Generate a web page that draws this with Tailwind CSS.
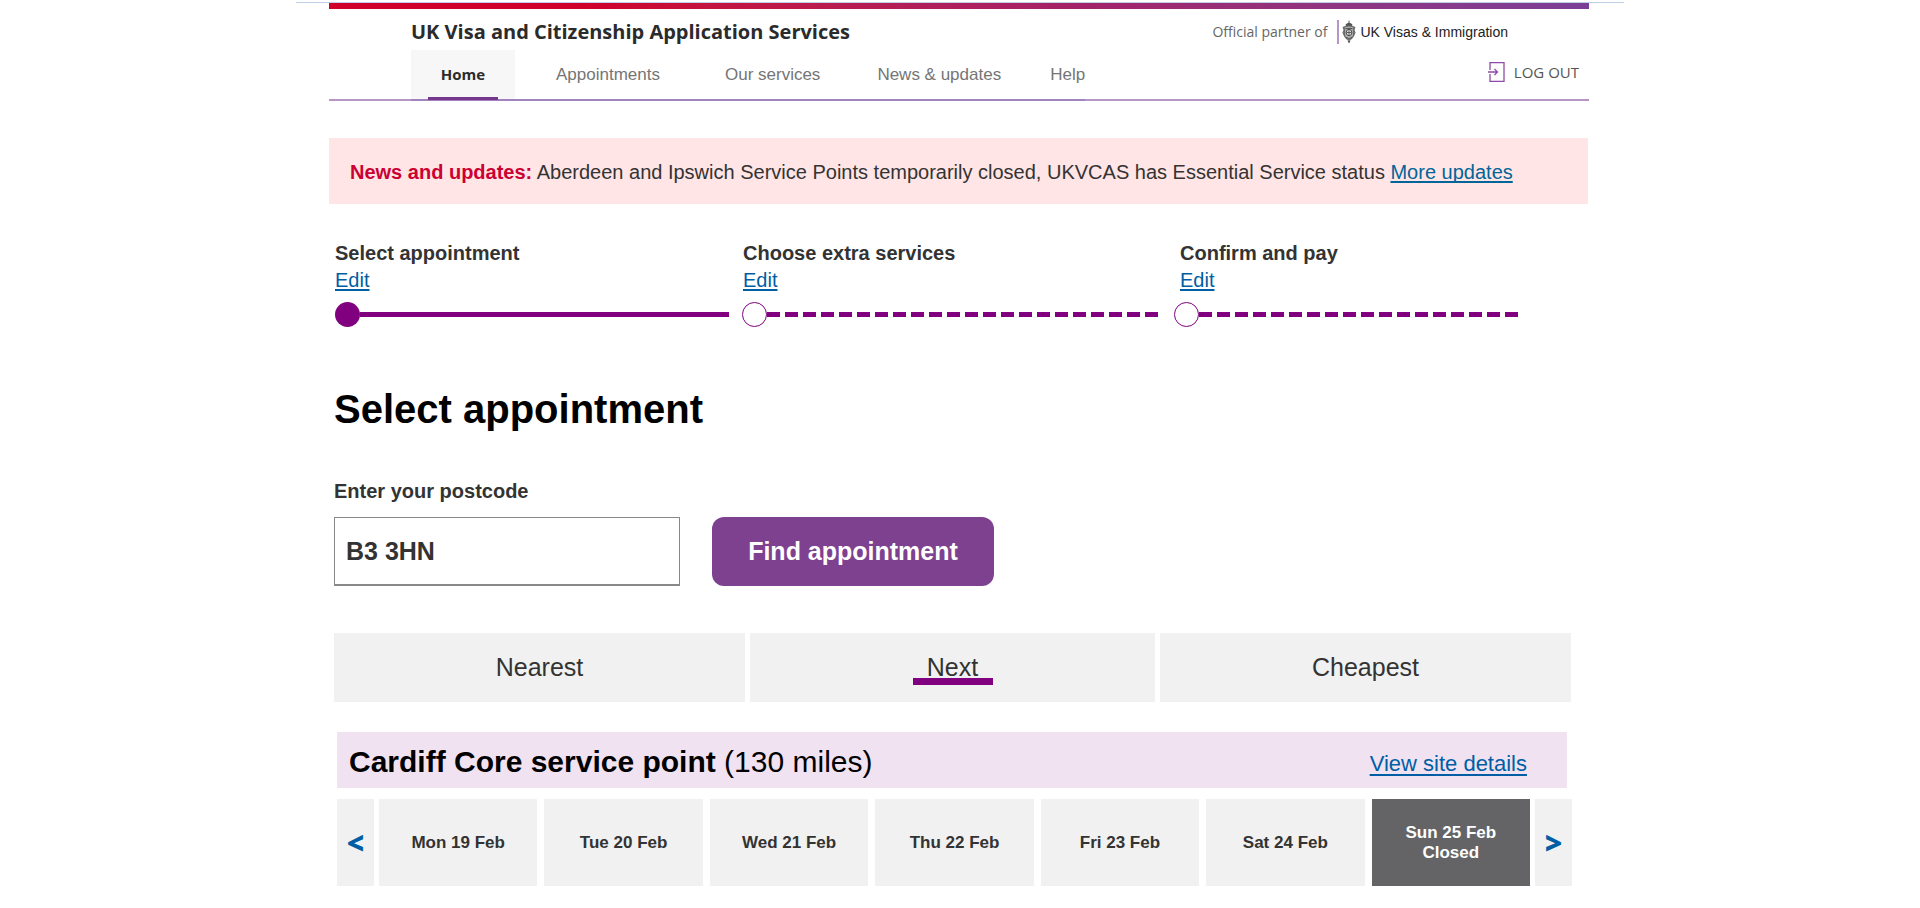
<!DOCTYPE html>
<html lang="en">
<head>
<meta charset="utf-8">
<meta name="viewport" content="width=device-width, initial-scale=1">
<title>UK Visa and Citizenship Application Services</title>
<script src="https://cdn.jsdelivr.net/npm/@tailwindcss/browser@4"></script>
</head>
<body class="bg-white font-['Liberation_Sans',Arial,sans-serif] text-[#333]">
<div class="mx-auto mt-[2px] max-w-[1328px] border-t border-[#bfd0e6] pr-[35px] pl-[33px]">
  <header>
    <div class="h-[6px] bg-linear-to-r from-[#cf0029] from-20% via-[#a3226a] via-60% to-[#7b3f97]"></div>
    <div class="flex items-center justify-between pt-[8px] pr-[81px] pl-[82px]">
      <p class="font-['Open_Sans',sans-serif] text-[20px] leading-[30px] font-bold text-[#2b2b2b]">UK Visa and Citizenship Application Services</p>
      <div class="flex items-center">
        <span class="pr-[10px] font-['Open_Sans',sans-serif] text-[14px] leading-[24px] text-[#666]">Official partner of</span>
        <a href="#" class="flex items-center border-l-2 border-[#b795c4] pl-[3px] text-[14px] leading-[24px] text-[#222]">
          <svg class="mr-[4px] h-[24px] w-[14px]" viewBox="0 0 14 24" fill="none" aria-hidden="true">
            <path d="M7 0.500v3M4 4.500q3-3 6 0l-.6 2.500h-4.800z" fill="#555" stroke="#444" stroke-width=".8"/>
            <path d="M2 7q5-2 10 0l-.5 9q-1.500 3-4.500 4-3-1-4.500-4z" fill="#aaa" stroke="#666" stroke-width="1.200"/>
            <path d="M1 7l1.500 3-1.500 2.500 1.500 3M13 7l-1.500 3 1.500 2.500-1.500 3" stroke="#666" stroke-width="1.200"/>
            <ellipse cx="7" cy="12.500" rx="2.800" ry="3.200" fill="#ddd" stroke="#444" stroke-width=".9"/>
            <path d="M7 9.500v6M4.500 12.500h5M3.500 8.500h7M4 17.500l3 1 3-1" stroke="#444" stroke-width=".8"/>
            <path d="M5.500 20.500h3L7 23.500z" fill="#444"/>
          </svg>UK Visas &amp; Immigration</a>
      </div>
    </div>
    <div class="mt-[3px] flex h-[51px] justify-between border-b-2 border-[#b795c4] pr-[10px] pl-[82px]">
      <nav class="-mb-[2px] flex border-b-2 border-[#a184bd] text-[17px] leading-[50px] text-[#757575]" aria-label="Main">
        <a href="#" aria-current="page" class="flex w-[104px] flex-col items-center bg-[#f7f7f7] font-['Open_Sans',sans-serif] text-[15px] leading-[48px] font-bold text-[#2b2b2b]">
          <span class="h-[47px] shrink-0">Home</span><span class="h-[3px] w-[70px] shrink-0 bg-[#75368d]"></span></a>
        <a href="#" class="ml-[41px]">Appointments</a>
        <a href="#" class="ml-[65px]">Our services</a>
        <a href="#" class="ml-[57px]">News &amp; updates</a>
        <a href="#" class="ml-[49px]">Help</a>
      </nav>
      <button type="button" class="flex h-[44px] items-center gap-[9px] font-['Open_Sans',sans-serif] text-[15px] text-[#555]">
        <svg class="h-[20px] w-[17px]" viewBox="0 0 17 20" fill="none" stroke="#8e4aa8" stroke-width="1.300" aria-hidden="true"><path d="M2 8V.7h14v18.600H2V12M0 10h9.500M6.500 7l3 3-3 3"/></svg>LOG OUT</button>
    </div>
  </header>

  <main>
    <aside class="mt-[37px] mr-[1px] flex items-center bg-[#ffe5e5] px-[21px] pt-[21px] pb-[19px] text-[20px] leading-[26px]">
      <p><strong class="text-[#cc0033]">News and updates:</strong> Aberdeen and Ipswich Service Points temporarily closed, UKVCAS has Essential Service status <a href="#" class="text-[#006699] underline decoration-2 underline-offset-2 [text-decoration-skip-ink:none]">More updates</a></p>
    </aside>

    <ol class="mt-[36px] grid grid-cols-[407fr_432fr_350fr] pr-[65px] pl-[6px] text-[20px] leading-[27px]">
      <li>
        <p class="font-bold">Select appointment</p>
        <a href="#" class="text-[#005ea5] underline decoration-2 underline-offset-2">Edit</a>
        <div class="mt-[8px] flex items-center pr-[13px]">
          <span class="size-[25px] rounded-full bg-[#800080]"></span>
          <span class="h-[5px] flex-1 bg-[#800080]"></span>
        </div>
      </li>
      <li>
        <p class="pl-[1px] font-bold">Choose extra services</p>
        <a href="#" class="ml-[1px] text-[#005ea5] underline decoration-2 underline-offset-2">Edit</a>
        <div class="mt-[8px] flex items-center pr-[11px]">
          <span class="size-[25px] rounded-full border border-[#800080]"></span>
          <span class="h-[5px] flex-1 bg-[repeating-linear-gradient(to_right,#800080_0_13px,transparent_13px_18px)]"></span>
        </div>
      </li>
      <li>
        <p class="pl-[6px] font-bold">Confirm and pay</p>
        <a href="#" class="ml-[6px] text-[#005ea5] underline decoration-2 underline-offset-2">Edit</a>
        <div class="mt-[8px] flex items-center pr-[2px]">
          <span class="size-[25px] rounded-full border border-[#800080]"></span>
          <span class="h-[5px] flex-1 bg-[repeating-linear-gradient(to_right,#800080_0_13px,transparent_13px_18px)]"></span>
        </div>
      </li>
    </ol>

    <h1 class="mt-[57px] pl-[5px] text-[40px] leading-[50px] font-bold text-black">Select appointment</h1>

    <form class="mt-[43px] pl-[5px]" onsubmit="return false">
      <label for="postcode" class="block text-[20px] leading-[28px] font-bold">Enter your postcode</label>
      <div class="mt-[12px] flex gap-[32px]">
        <input id="postcode" type="text" value="B3 3HN" class="h-[69px] w-[346px] border border-b-2 border-[#888] px-[11px] text-[25px] font-bold">
        <button type="submit" class="h-[69px] w-[282px] rounded-xl bg-[#7e4190] text-[25px] font-bold text-white">Find appointment</button>
      </div>
    </form>

    <div class="mt-[47px] mr-[18px] ml-[5px] grid grid-cols-[411fr_405fr_411fr] gap-[5px] text-[25px]">
      <button type="button" class="h-[69px] bg-[#f1f1f1]">Nearest</button>
      <button type="button" aria-pressed="true" class="relative h-[69px] bg-[#f1f1f1]">Next<span class="absolute top-[45px] left-1/2 h-[7px] w-[80px] -translate-x-1/2 bg-[#800080]"></span></button>
      <button type="button" class="h-[69px] bg-[#f1f1f1]">Cheapest</button>
    </div>

    <section class="mt-[30px] mr-[17px] ml-[8px]">
      <div class="mr-[5px] flex h-[56px] items-center justify-between bg-[#f0e2f1] pr-[40px] pl-[12px]">
        <h2 class="pt-[4px] text-[30px] leading-[40px] text-black"><strong>Cardiff Core service point</strong> (130 miles)</h2>
        <a href="#" class="pt-[6px] text-[22px] text-[#005ea5] underline decoration-2 underline-offset-3">View site details</a>
      </div>
      <div class="mt-[11px] flex h-[87px] gap-[5px] text-[17px] leading-[20px] font-bold">
        <button type="button" aria-label="Previous week" class="w-[37px] bg-[#f1f1f1] font-['Noto_Sans',sans-serif] text-[30px] font-black text-[#005ea5]">&lt;</button>
        <div class="grid flex-1 grid-cols-7 gap-[7px]">
          <button type="button" class="bg-[#f1f1f1]">Mon 19 Feb</button>
          <button type="button" class="bg-[#f1f1f1]">Tue 20 Feb</button>
          <button type="button" class="bg-[#f1f1f1]">Wed 21 Feb</button>
          <button type="button" class="bg-[#f1f1f1]">Thu 22 Feb</button>
          <button type="button" class="bg-[#f1f1f1]">Fri 23 Feb</button>
          <button type="button" class="bg-[#f1f1f1]">Sat 24 Feb</button>
          <button type="button" disabled class="bg-[#646466] text-white">Sun 25 Feb<br>Closed</button>
        </div>
        <button type="button" aria-label="Next week" class="w-[37px] bg-[#f1f1f1] font-['Noto_Sans',sans-serif] text-[30px] font-black text-[#005ea5]">&gt;</button>
      </div>
    </section>
  </main>
</div>
</body>
</html>
